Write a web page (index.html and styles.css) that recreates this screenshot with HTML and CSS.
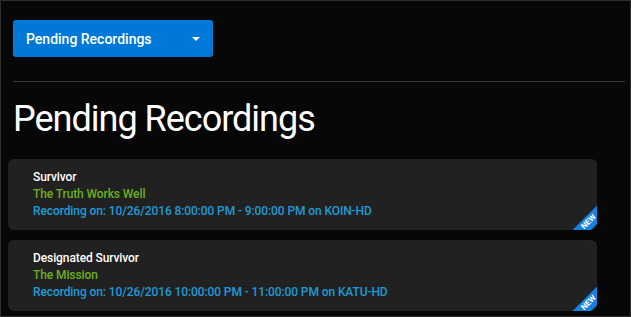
FILE: index.html
```html
<!DOCTYPE html>
<html lang="en">
<head>
    <meta charset="UTF-8">
    <meta name="viewport" content="width=device-width, initial-scale=1.0">
    <title>Pending Recordings</title>
    <link rel="stylesheet" href="styles.css">
</head>
<body>
    <div class="page">
        <button class="view-select">
            <span>Pending Recordings</span>
            <span class="caret"></span>
        </button>

        <hr class="divider">

        <h1>Pending Recordings</h1>

        <div class="recordings">
            <div class="recording">
                <div class="show-title">Survivor</div>
                <div class="episode">The Truth Works Well</div>
                <div class="schedule">Recording on: 10/26/2016 8:00:00 PM - 9:00:00 PM on KOIN-HD</div>
                <div class="ribbon"><span>NEW</span></div>
            </div>
            <div class="recording">
                <div class="show-title">Designated Survivor</div>
                <div class="episode">The Mission</div>
                <div class="schedule">Recording on: 10/26/2016 10:00:00 PM - 11:00:00 PM on KATU-HD</div>
                <div class="ribbon"><span>NEW</span></div>
            </div>
        </div>
    </div>
</body>
</html>
```

FILE: styles.css
```css
:root {
    --primary-color: #0078d7;
    --background-color: #070707;
    --card-color: #212121;
    --episode-color: #6ab01e;
    --schedule-color: #1e9ad8;
}

* {
    box-sizing: border-box;
    margin: 0;
    padding: 0;
}

html, body {
    height: 100%;
}

body {
    font-family: Roboto, "Liberation Sans", sans-serif;
    background-color: var(--background-color);
    color: #fff;
}

.page {
    height: 100%;
    border: 1px solid #2e2e2e;
    padding: 19px 5px 0 12px;
    overflow: hidden;
}

.view-select {
    display: flex;
    align-items: center;
    justify-content: space-between;
    width: 200px;
    height: 37px;
    padding: 0 13px;
    background-color: var(--primary-color);
    color: #fff;
    border: none;
    border-radius: 3px;
    font-family: inherit;
    font-size: 14px;
    font-weight: 500;
}

.caret {
    width: 0;
    height: 0;
    border-left: 4px solid transparent;
    border-right: 4px solid transparent;
    border-top: 4px solid #fff;
}

.divider {
    border: none;
    border-top: 1px solid #353535;
    margin-top: 24px;
}

h1 {
    font-size: 36px;
    font-weight: 400;
    letter-spacing: -1px;
    line-height: 45px;
    margin-top: 15px;
}

.recordings {
    display: flex;
    flex-direction: column;
    gap: 10px;
    margin: 17px 28px 0 -5px;
}

.recording {
    position: relative;
    overflow: hidden;
    height: 71px;
    padding: 10px 25px 0;
    background-color: var(--card-color);
    border-radius: 6px;
    font-size: 12px;
    font-weight: 500;
    letter-spacing: -0.1px;
    line-height: 17px;
}

.episode {
    color: var(--episode-color);
}

.schedule {
    color: var(--schedule-color);
}

/* diagonal corner band */
.ribbon {
    position: absolute;
    right: 2px;
    bottom: 2px;
    width: 12px;
    height: 12px;
    display: flex;
    align-items: center;
    justify-content: center;
    transform: rotate(-45deg);
}

.ribbon::before {
    content: "";
    position: absolute;
    left: -20px;
    right: -20px;
    top: -0.5px;
    bottom: -0.5px;
    background-color: #1581e0;
}

.ribbon span {
    position: relative;
    color: #fff;
    font-size: 8px;
    font-weight: 700;
    letter-spacing: 0;
    line-height: 1;
}
```
